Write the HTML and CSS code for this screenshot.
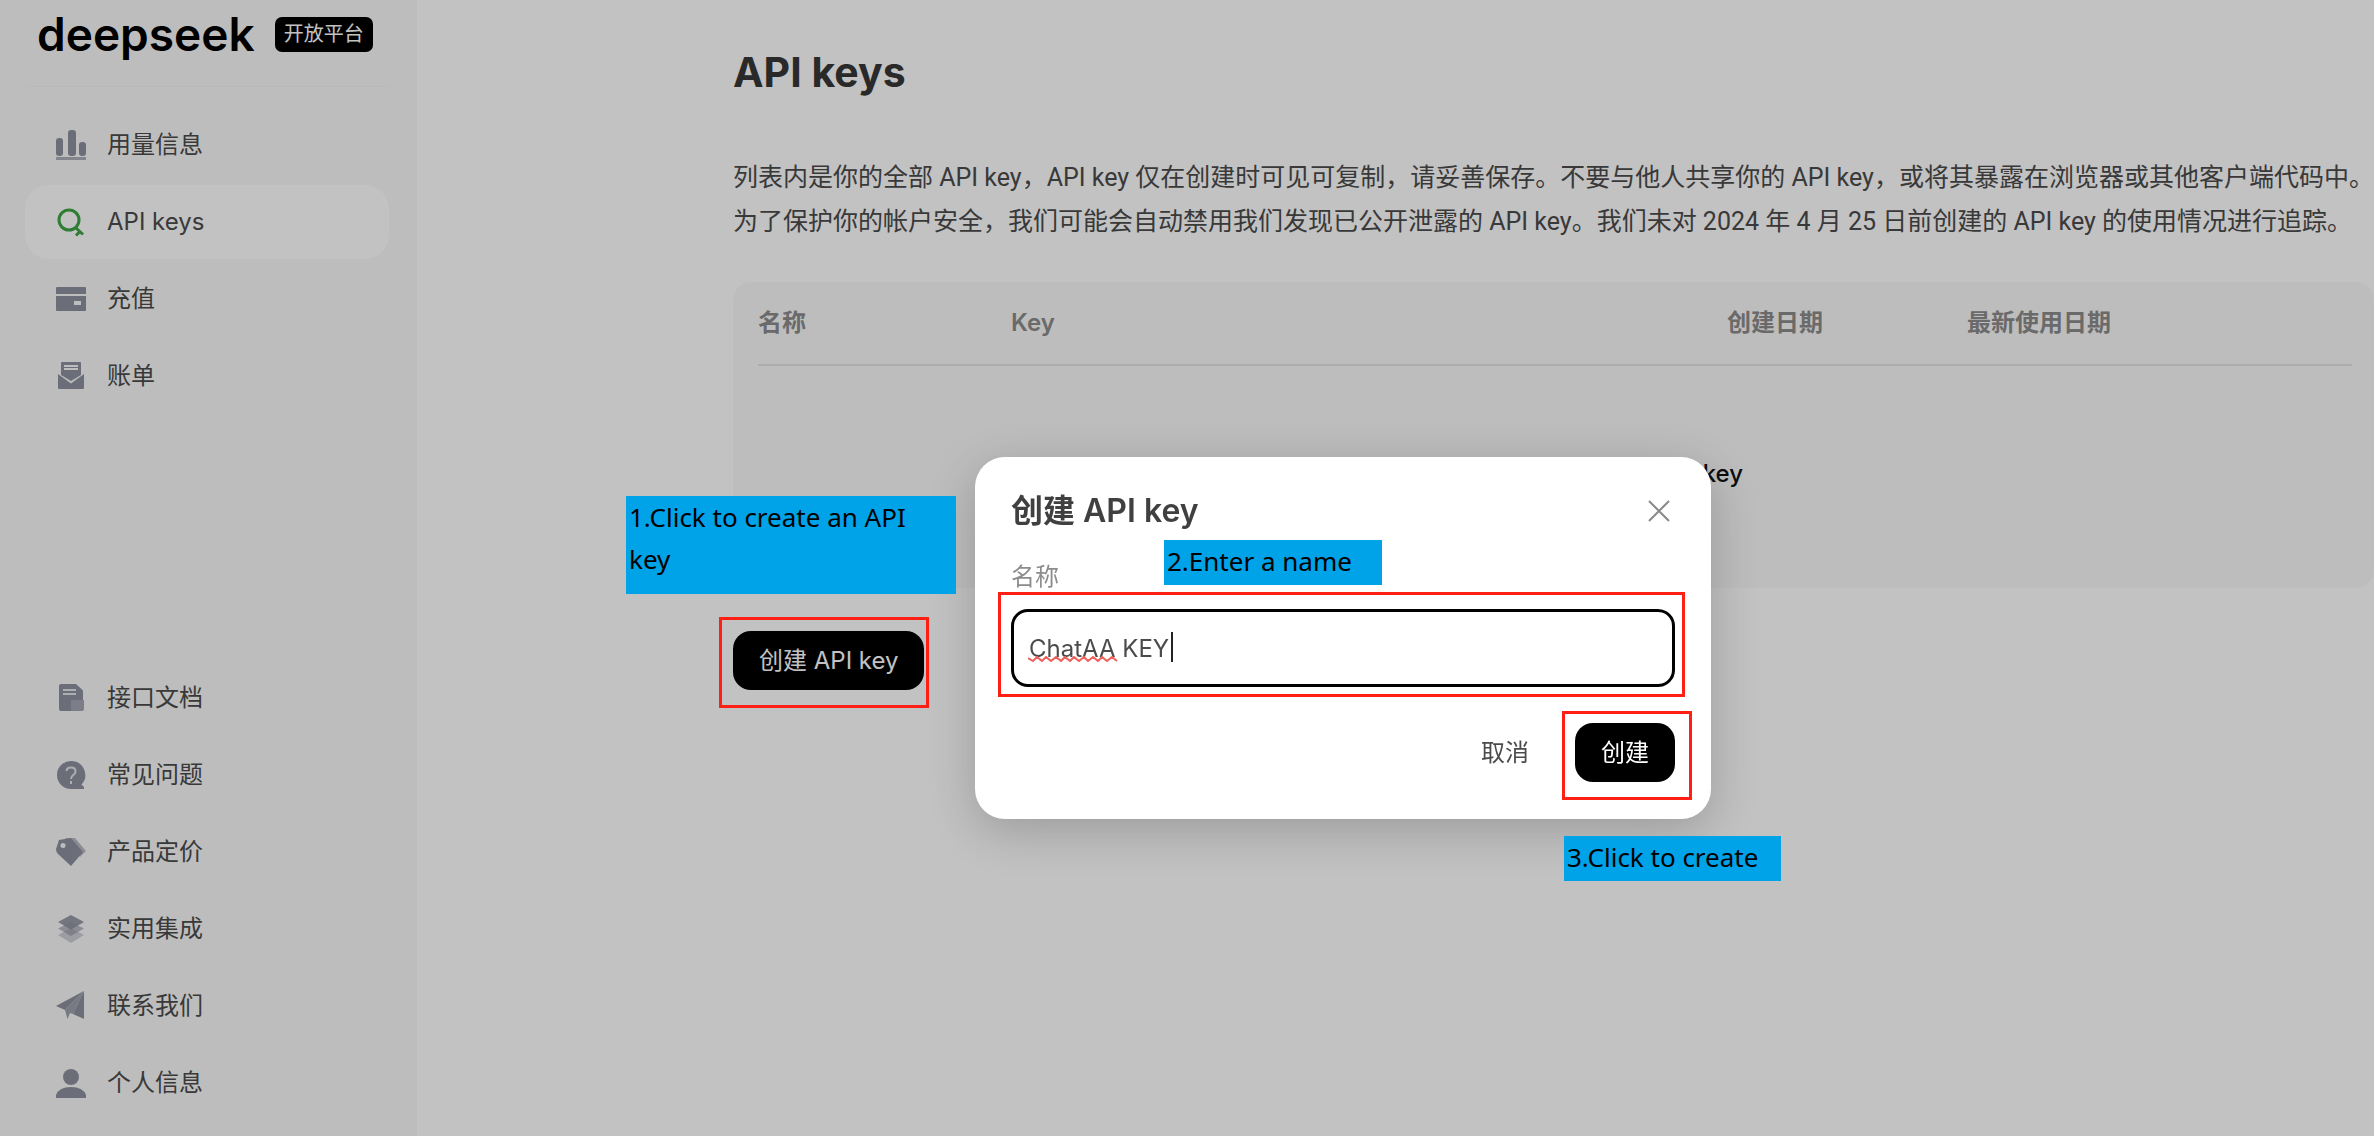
FILE: index.html
```html
<!DOCTYPE html>
<html lang="zh-CN">
<head>
<meta charset="utf-8">
<meta name="viewport" content="width=device-width, initial-scale=1">
<title>DeepSeek 开放平台</title>
<link rel="stylesheet" href="styles.css">
</head>
<body>
<div class="app">
  <aside class="sidebar">
    <div class="brand">
      <span class="brand-name">deepseek</span>
      <span class="brand-badge">开放平台</span>
    </div>
    <nav class="nav">
      <a class="nav-item" href="#usage">
        <svg class="icon" viewBox="0 0 30 30"><g fill="currentColor"><rect x="0" y="8" width="7" height="18" rx="3"/><rect x="12" y="0" width="8" height="26" rx="3"/><rect x="23" y="12" width="7" height="14" rx="3"/><rect x="0" y="27" width="30" height="3" opacity=".7"/></g></svg>
        用量信息
      </a>
      <a class="nav-item active" href="#keys" aria-current="page">
        <svg class="icon" viewBox="0 0 30 30"><g fill="none" stroke="currentColor" stroke-width="3"><circle cx="13" cy="13" r="10"/><path d="M19.500 20.500 27 27.500M24 24.500 20 28.500"/></g></svg>
        API keys
      </a>
      <a class="nav-item" href="#topup">
        <svg class="icon" viewBox="0 0 30 30"><path fill="currentColor" fill-rule="evenodd" d="M1 3H29Q30 3 30 4V10H0V4Q0 3 1 3ZM0 12H30V26Q30 27 29 27H1Q0 27 0 26ZM18 17V21H25V17Z"/></svg>
        充值
      </a>
      <a class="nav-item" href="#bills">
        <svg class="icon" viewBox="0 0 30 30"><path fill="currentColor" fill-rule="evenodd" d="M6 1H24Q25 1 25 2V14L15 20 5 14V2Q5 1 6 1ZM8 4V9H22V4ZM2 13 4 14.500 15 22.500 26 14.500 28 13V27Q28 28 27 28H3Q2 28 2 27Z"/><path stroke="currentColor" stroke-width="1" d="M8 6.500H22"/></svg>
        账单
      </a>
    </nav>
    <nav class="nav nav-bottom">
      <a class="nav-item" href="#docs">
        <svg class="icon" viewBox="0 0 30 30"><path fill="currentColor" d="M5 1H20L27 7.500V17H15V28H5Q3 28 3 26V3Q3 1 5 1Z"/><path fill="currentColor" opacity=".8" d="M15 17H28V26Q28 28 26 28H15Z"/><path class="cutout" d="M7 7H20M7 11H20"/></svg>
        接口文档
      </a>
      <a class="nav-item" href="#faq">
        <svg class="icon" viewBox="0 0 30 30"><path fill="currentColor" d="M15 1A14 14 0 1 0 15 29H28V27L25.500 24.500A14 14 0 0 0 15 1Z"/><path class="cutout" d="M10.500 11Q10.500 7.500 15 7.500T19.500 11.500Q19.500 13.500 17.300 15T15 19M15 21V24"/></svg>
        常见问题
      </a>
      <a class="nav-item" href="#pricing">
        <svg class="icon" viewBox="0 0 30 30"><path fill="currentColor" opacity=".6" d="M9 1H19L30 14 24 20Z"/><path fill="currentColor" fill-rule="evenodd" d="M3 3 15 1 27 15 15 29 2 17Q0 15 0 12ZM7 6A2.500 2.500 0 1 0 7 11A2.500 2.500 0 1 0 7 6Z"/></svg>
        产品定价
      </a>
      <a class="nav-item" href="#integrations">
        <svg class="icon" viewBox="0 0 30 30"><g fill="currentColor"><path opacity=".4" d="M2 21 15 14 28 21 15 29Z"/><path opacity=".6" d="M2 14.500 15 8 28 14.500 15 22Z"/><path opacity=".9" d="M2 8 15 1 28 8 15 15.500Z"/></g></svg>
        实用集成
      </a>
      <a class="nav-item" href="#contact">
        <svg class="icon" viewBox="0 0 30 30"><path fill="currentColor" d="M28 0 0 15 9 19Z"/><path fill="currentColor" d="M28 0V28L17 23Z"/><path fill="currentColor" opacity=".85" d="M28 0 9 19 11.500 28 14 22 17 23Z"/></svg>
        联系我们
      </a>
      <a class="nav-item" href="#profile">
        <svg class="icon" viewBox="0 0 30 30"><g fill="currentColor"><circle cx="15" cy="9" r="8"/><path d="M0 30V27Q3 19 15 19T30 27V30Z"/></g></svg>
        个人信息
      </a>
    </nav>
  </aside>

  <main class="main">
    <h1 class="page-title">API keys</h1>
    <p class="intro">列表内是你的全部 API key，API key 仅在创建时可见可复制，请妥善保存。不要与他人共享你的 API key，或将其暴露在浏览器或其他客户端代码中。<br>为了保护你的帐户安全，我们可能会自动禁用我们发现已公开泄露的 API key。我们未对 2024 年 4 月 25 日前创建的 API key 的使用情况进行追踪。</p>
    <div class="card">
      <table class="keys">
        <colgroup><col class="col-name"><col class="col-key"><col class="col-created"><col></colgroup>
        <thead>
          <tr><th scope="col">名称</th><th scope="col">Key</th><th scope="col">创建日期</th><th scope="col">最新使用日期</th></tr>
        </thead>
        <tbody>
          <tr><td class="empty" colspan="4">暂无 API key，你可以创建 API key</td></tr>
        </tbody>
      </table>
    </div>
    <button class="btn" type="button">创建 API key</button>
  </main>
</div>

<div class="backdrop"></div>

<form class="modal" role="dialog" aria-labelledby="modal-title">
  <header class="modal-head">
    <h2 class="modal-title" id="modal-title">创建 API key</h2>
    <button class="close" type="button" aria-label="关闭">
      <svg viewBox="0 0 22 22" width="22" height="22"><path d="M1 1 21 21M21 1 1 21" fill="none" stroke="currentColor" stroke-width="2"/></svg>
    </button>
  </header>
  <label class="field-label" for="key-name">名称</label>
  <div class="field">
    <input class="field-input" id="key-name" type="text" value="ChatAA KEY" spellcheck="false">
    <svg class="squiggle" width="90" height="6" viewBox="0 0 90 6"><path fill="none" stroke="#f0605a" stroke-width="2" d="M0 2 5 5 9 1 14 5 18 1 23 5 28 1 33 5 37 1 42 5 46 1 51 5 56 1 60 5 65 1 70 5 74 1 79 5 84 1 89 5"/></svg>
    <span class="caret"></span>
  </div>
  <footer class="modal-foot">
    <button class="btn-text" type="button">取消</button>
    <button class="btn btn-primary" type="submit">创建</button>
  </footer>
</form>

<div class="frame frame-open"></div>
<div class="frame frame-name"></div>
<div class="frame frame-submit"></div>
<div class="note note-open">1.Click to create an API key</div>
<div class="note note-name">2.Enter a name</div>
<div class="note note-submit">3.Click to create</div>
</body>
</html>
```

FILE: styles.css
```css
* {
  box-sizing: border-box;
}

body {
  margin: 0;
  position: relative;
  overflow-x: hidden;
  background: #fff;
  color: #4b4b4b;
  font-family: Inter, "Noto Sans CJK SC", sans-serif;
  font-size: 24px;
  line-height: 44px;
}

button,
input {
  font: inherit;
}

.app {
  display: flex;
  min-height: 100vh;
}

/* Sidebar */
.sidebar {
  display: flex;
  flex-direction: column;
  flex: 0 0 417px;
  padding: 0 28px 16px 25px;
  background: #f9f9f9;
}

.brand {
  display: flex;
  align-items: center;
  gap: 20px;
  height: 87px;
  padding: 0 12px 18px;
  border-bottom: 1px solid #f3f3f3;
}

.brand-name {
  color: #000;
  font-size: 46px;
  font-weight: 600;
}

.brand-badge {
  padding: 0 9px;
  border-radius: 7px;
  background: #000;
  color: #fff;
  font-size: 20px;
  line-height: 35px;
  white-space: nowrap;
}

.nav {
  display: flex;
  flex-direction: column;
  gap: 3px;
  margin-top: 21px;
}

.nav-bottom {
  margin-top: auto;
}

.nav-item {
  display: flex;
  align-items: center;
  gap: 21px;
  height: 74px;
  padding: 0 31px;
  border-radius: 24px;
  color: #4b4b4b;
  text-decoration: none;
}

.nav-item.active {
  background: #fff;
}

.icon {
  width: 30px;
  height: 30px;
  color: #8d909f;
}

.active .icon {
  color: #3ca542;
}

.cutout {
  fill: none;
  stroke: #e4e5e9;
  stroke-width: 2;
}

/* Main column */
.main {
  flex: 1;
  min-width: 0;
  padding: 48px 0 0 316px;
}

.page-title {
  margin: 0 0 60px;
  color: #373737;
  font-size: 41px;
  font-weight: 700;
  line-height: 48px;
}

.intro {
  margin: 0 0 38px;
  font-family: Roboto, "Noto Sans CJK SC", sans-serif;
  font-size: 25px;
  white-space: nowrap;
}

.card {
  height: 306px;
  padding: 0 22px 0 25px;
  border-radius: 18px;
  background: #f9f9f9;
}

.keys {
  width: 100%;
  border-collapse: collapse;
  table-layout: fixed;
}

.col-name {
  width: 253px;
}

.col-key {
  width: 716px;
}

.col-created {
  width: 240px;
}

.keys th {
  height: 83px;
  padding: 0;
  border-bottom: 2px solid #e4e4e4;
  color: #8c8c8c;
  font-weight: 600;
  text-align: left;
}

.keys td {
  height: 216px;
  padding: 0;
  color: #111;
  font-weight: 500;
  text-align: center;
}

.btn {
  height: 59px;
  padding: 0 26px;
  border: 0;
  border-radius: 18px;
  background: #000;
  color: #fff;
}

.main .btn {
  margin-top: 43px;
}

/* Dialog */
.backdrop {
  position: fixed;
  inset: 0;
  background: rgba(0, 0, 0, 0.24);
}

.modal {
  position: absolute;
  top: 457px;
  left: 975px;
  width: 736px;
  padding: 30px 36px 37px;
  border-radius: 30px;
  background: #fff;
  box-shadow: 0 12px 48px rgba(0, 0, 0, 0.2);
}

.modal-head {
  display: flex;
  align-items: center;
  justify-content: space-between;
  height: 48px;
}

.modal-title {
  margin: 0;
  color: #404040;
  font-size: 32px;
  font-weight: 600;
}

.close {
  display: flex;
  padding: 5px;
  border: 0;
  background: none;
  color: #8a8a8a;
}

.field-label {
  display: block;
  margin: 20px 0 10px;
  color: #8c8c8c;
}

.field {
  position: relative;
}

.field-input {
  display: block;
  width: 100%;
  height: 78px;
  padding: 0 15px;
  border: 3px solid #000;
  border-radius: 17px;
  outline: 0;
  background: #fff;
  color: #4b4b4b;
}

.squiggle {
  position: absolute;
  top: 47px;
  left: 17px;
}

.caret {
  position: absolute;
  top: 23px;
  left: 160px;
  width: 2px;
  height: 30px;
  background: #222;
}

.modal-foot {
  display: flex;
  align-items: center;
  justify-content: flex-end;
  gap: 22px;
  margin-top: 36px;
}

.btn-text {
  border: 0;
  padding: 0 24px;
  background: none;
  color: #4b4b4b;
}

/* Walkthrough notes laid over the screen */
.frame {
  position: absolute;
  border: 3px solid #ff1f14;
  pointer-events: none;
}

.frame-open {
  top: 617px;
  left: 719px;
  width: 210px;
  height: 91px;
}

.frame-name {
  top: 592px;
  left: 998px;
  width: 687px;
  height: 105px;
}

.frame-submit {
  top: 711px;
  left: 1562px;
  width: 130px;
  height: 89px;
}

.note {
  position: absolute;
  padding: 0 3px;
  background: #00a2e8;
  color: #000;
  font-family: "Noto Sans", sans-serif;
  font-size: 26px;
  line-height: 42px;
}

.note-open {
  top: 496px;
  left: 626px;
  width: 330px;
  height: 98px;
  padding-right: 24px;
}

.note-name {
  top: 540px;
  left: 1164px;
  width: 218px;
  height: 45px;
}

.note-submit {
  top: 836px;
  left: 1564px;
  width: 217px;
  height: 45px;
}
```
